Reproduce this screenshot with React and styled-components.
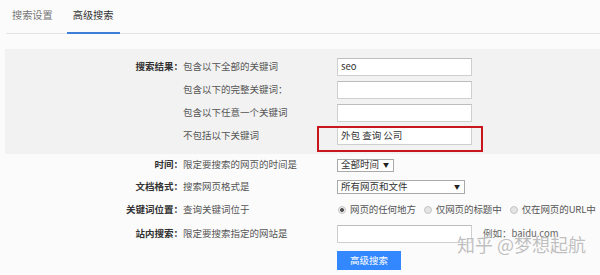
import React from "react";
import styled, { createGlobalStyle } from "styled-components";

const GlobalStyle = createGlobalStyle`
    body {
        margin: 0;
        background: #fbfbfb;
        font-family: "Noto Sans CJK SC", "Noto Sans", sans-serif;
    }
`;

const Page = styled.div`
    position: relative;
    width: 600px;
    height: 275px;
    overflow: hidden;
    font-size: 9.5px;
    line-height: 1.2;
    color: #555;
`;

const TabBar = styled.div`
    display: flex;
    gap: 8px;
    height: 33px;
    margin-left: 6px;
    border-bottom: 1px solid #e4e4e4;
`;

const Tab = styled.div`
    display: flex;
    align-items: center;
    padding: 0 6px 2px;
    font-size: 10.2px;
    color: ${(p) => (p.$active ? "#333" : "#777")};
    border-bottom: 2px solid ${(p) => (p.$active ? "#3d7fd6" : "transparent")};
    margin-bottom: -1px;
`;

const Panel = styled.div`
    margin: 15px 0 0 5px;
    padding: 9px 0;
    background: #f2f2f2;
    display: flex;
    flex-direction: column;
    gap: 5px;
`;

const Section = styled.div`
    margin-left: 5px;
    display: flex;
    flex-direction: column;
`;

const Row = styled.div`
    display: grid;
    grid-template-columns: 178px 154px 1fr;
    align-items: center;
    height: ${(p) => p.$h || 18}px;
    margin-top: ${(p) => p.$mt || 0}px;
`;

const Label = styled.div`
    text-align: right;
    font-weight: bold;
    color: #333;
    white-space: nowrap;
`;

const Desc = styled.div`
    color: #555;
    white-space: nowrap;
`;

const Control = styled.div`
    position: relative;
    display: flex;
    align-items: center;
    gap: 11px;
`;

const Input = styled.div`
    box-sizing: border-box;
    width: 135px;
    height: 18px;
    background: #fff;
    border: 1px solid #cfcfcf;
    border-top-color: #bdbdbd;
    padding: 0 3px;
    display: flex;
    align-items: center;
    color: #333;
    font-size: 9.5px;
    white-space: pre;
`;

const Highlight = styled.div`
    position: absolute;
    left: -20px;
    top: -1px;
    width: 166px;
    height: 26px;
    box-sizing: border-box;
    border: 2px solid #c8161e;
`;

const Select = styled.div`
    box-sizing: border-box;
    width: ${(p) => p.$w}px;
    height: ${(p) => p.$h}px;
    background: #fff;
    border: 1px solid #a9a9a9;
    display: flex;
    align-items: center;
    justify-content: space-between;
    padding: 0 4px 0 3px;
    color: #333;
    font-size: 9.5px;
`;

const Arrow = styled.span`
    font-size: 6px;
    color: #222;
`;

const RadioGroup = styled.div`
    display: flex;
    align-items: center;
    gap: 8px;
    margin-left: 1px;
`;

const RadioItem = styled.div`
    display: flex;
    align-items: center;
    gap: 4px;
    color: #555;
    white-space: nowrap;
    letter-spacing: -0.1px;
`;

const Radio = styled.span`
    box-sizing: border-box;
    width: 8px;
    height: 8px;
    border-radius: 50%;
    border: 1px solid #c4c4c4;
    background: ${(p) => (p.$on ? "radial-gradient(circle, #555 0 1.8px, #eee 2.2px)" : "#e4e4e4")};
`;

const Hint = styled.span`
    color: #666;
    white-space: nowrap;
`;

const Button = styled.div`
    width: 64px;
    height: 19px;
    background: #3388ff;
    color: #fff;
    display: flex;
    align-items: center;
    justify-content: center;
    font-size: 9.5px;
`;

const Watermark = styled.div`
    position: absolute;
    left: 457px;
    top: 235px;
    font-size: 18px;
    line-height: 1;
    color: rgba(170, 170, 170, 0.75);
    text-shadow: 0 0 1px #fff;
    white-space: nowrap;
`;

export default function App() {
    return (
        <Page>
            <GlobalStyle />
            <TabBar>
                <Tab>搜索设置</Tab>
                <Tab $active>高级搜索</Tab>
            </TabBar>

            <Panel>
                <Row>
                    <Label>搜索结果：</Label>
                    <Desc>包含以下全部的关键词</Desc>
                    <Control>
                        <Input>seo</Input>
                    </Control>
                </Row>
                <Row>
                    <Label />
                    <Desc>包含以下的完整关键词：</Desc>
                    <Control>
                        <Input />
                    </Control>
                </Row>
                <Row>
                    <Label />
                    <Desc>包含以下任意一个关键词</Desc>
                    <Control>
                        <Input />
                    </Control>
                </Row>
                <Row>
                    <Label />
                    <Desc>不包括以下关键词</Desc>
                    <Control>
                        <Input>外包 查询 公司</Input>
                        <Highlight />
                    </Control>
                </Row>
            </Panel>

            <Section>
                <Row $h={22}>
                    <Label>时间：</Label>
                    <Desc>限定要搜索的网页的时间是</Desc>
                    <Control>
                        <Select $w={57} $h={13}>
                            全部时间 <Arrow>▼</Arrow>
                        </Select>
                    </Control>
                </Row>
                <Row $h={22}>
                    <Label>文档格式：</Label>
                    <Desc>搜索网页格式是</Desc>
                    <Control>
                        <Select $w={128} $h={14}>
                            所有网页和文件 <Arrow>▼</Arrow>
                        </Select>
                    </Control>
                </Row>
                <Row $h={24}>
                    <Label>关键词位置：</Label>
                    <Desc>查询关键词位于</Desc>
                    <Control>
                        <RadioGroup>
                            <RadioItem>
                                <Radio $on />
                                网页的任何地方
                            </RadioItem>
                            <RadioItem>
                                <Radio />
                                仅网页的标题中
                            </RadioItem>
                            <RadioItem>
                                <Radio />
                                仅在网页的URL中
                            </RadioItem>
                        </RadioGroup>
                    </Control>
                </Row>
                <Row $h={23}>
                    <Label>站内搜索：</Label>
                    <Desc>限定要搜索指定的网站是</Desc>
                    <Control>
                        <Input />
                        <Hint>例如：baidu.com</Hint>
                    </Control>
                </Row>
                <Row $h={19} $mt={6}>
                    <Label />
                    <Desc />
                    <Control>
                        <Button>高级搜索</Button>
                    </Control>
                </Row>
            </Section>

            <Watermark>知乎 @梦想起航</Watermark>
        </Page>
    );
}
